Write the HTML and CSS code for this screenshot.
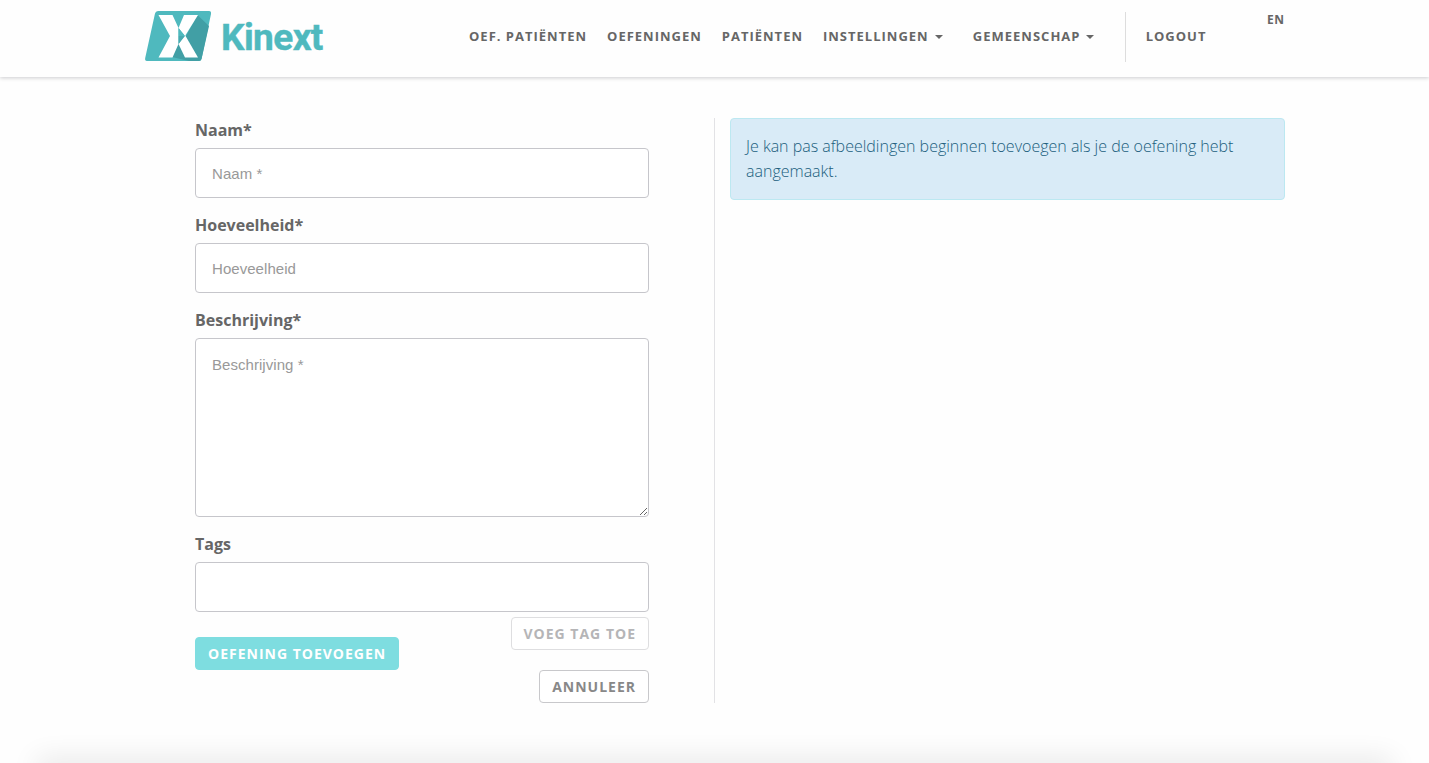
FILE: index.html
```html
<!DOCTYPE html>
<html lang="nl">
<head>
<meta charset="utf-8">
<title>Kinext</title>
<link rel="stylesheet" href="styles.css">
</head>
<body>
<header class="header">
  <a class="brand">
    <svg class="logo" viewBox="0 0 68 52" width="68" height="52" aria-hidden="true">
      <path d="M14 1H65Q67.500 1 67 4L57.500 49Q57 51 55 51H3Q.6 51 1.200 48L11 3.500Q11.500 1 14 1Z" fill="#4fb9be"/>
      <path d="M53.500 5L65 16L57.500 49Q57 51 55 51H45L28 47L34 34L42 26Z" fill="#419fa5"/>
      <path d="M14.500 5H28.500L34.500 18V34L28.500 47.500H14.500L26 26Z" fill="#fff"/>
      <path d="M40 5H54L41 26L34.500 18Z" fill="#fff"/>
      <path d="M41 25L54 47.500H41L34.500 34Z" fill="#fff"/>
      <path d="M34.500 18V26H41Z" fill="#4fb9be"/>
      <path d="M34.500 34V26H41Z" fill="#46aab0"/>
    </svg>
    <span class="brand-name">Kinext</span>
  </a>
  <nav class="nav">
    <a class="nav-link">OEF. PATIËNTEN</a>
    <a class="nav-link">OEFENINGEN</a>
    <a class="nav-link">PATIËNTEN</a>
    <a class="nav-link dropdown">INSTELLINGEN<i class="caret"></i></a>
    <a class="nav-link dropdown">GEMEENSCHAP<i class="caret"></i></a>
    <a class="nav-link logout">LOGOUT</a>
  </nav>
  <a class="language">EN</a>
</header>
<main class="content">
  <form class="exercise-form">
    <label class="label" for="name">Naam*</label>
    <input class="field" id="name" placeholder="Naam *">
    <label class="label" for="amount">Hoeveelheid*</label>
    <input class="field" id="amount" placeholder="Hoeveelheid">
    <label class="label" for="description">Beschrijving*</label>
    <textarea class="field description" id="description" placeholder="Beschrijving *"></textarea>
    <label class="label" for="tags">Tags</label>
    <input class="field" id="tags">
    <div class="actions">
      <button class="button primary" type="button">OEFENING TOEVOEGEN</button>
      <div class="secondary-actions">
        <button class="button muted" type="button" disabled>VOEG TAG TOE</button>
        <button class="button" type="button">ANNULEER</button>
      </div>
    </div>
  </form>
  <section class="images">
    <p class="notice">Je kan pas afbeeldingen beginnen toevoegen als je de oefening hebt aangemaakt.</p>
  </section>
</main>
<div class="bottom-shadow"></div>
</body>
</html>
```
FILE: styles.css
```css
* { box-sizing: border-box; }
body {
  margin: 0;
  height: 763px;
  overflow: hidden;
  background: #fefefe;
  color: #666;
  font-family: "Open Sans", sans-serif;
  font-size: 16px;
}
.header {
  display: flex;
  align-items: flex-start;
  height: 77px;
  padding-left: 144px;
  box-shadow: 0 1px 4px rgba(0, 0, 20, .2);
}
.brand { display: flex; width: 325px; padding-top: 10px; }
.logo { flex: none; }
.brand-name {
  margin: 4px 0 0 9px;
  color: #4fb9be;
  font: bold 37px/47px Roboto, sans-serif;
  letter-spacing: -.6px;
  -webkit-text-stroke: .4px #4fb9be;
}
.nav { display: flex; width: 798px; padding-top: 12px; }
.nav-link {
  height: 50px;
  margin-right: 20px;
  font-size: 13px;
  font-weight: 700;
  line-height: 49px;
  letter-spacing: 1px;
  white-space: nowrap;
}
.dropdown { margin-right: 30.2px; }
.caret {
  display: inline-block;
  margin-left: 6px;
  border: 4px solid transparent;
  border-top-color: currentColor;
  border-bottom: 0;
  vertical-align: 2px;
}
.logout { padding-left: 20px; border-left: 1px solid #ddd; }
.language { padding-top: 11px; font-size: 12px; font-weight: 700; line-height: 17px; letter-spacing: .5px; }
.content { display: flex; padding: 41px 0 0 195px; }
.exercise-form { width: 454px; }
.label { display: block; height: 30px; font-weight: 700; line-height: 24px; }
.field {
  display: block;
  width: 100%;
  height: 50px;
  margin-bottom: 15px;
  padding: 0 16px;
  border: 1px solid #c6c6cb;
  border-radius: 4px;
  background: #fff;
  font: 15px/22px "Liberation Sans", Arial, sans-serif;
  letter-spacing: .05px;
}
.field::placeholder { color: #999; opacity: 1; }
.description { height: 179px; padding-top: 15px; resize: vertical; }
.actions { display: flex; justify-content: space-between; align-items: flex-start; margin-top: -10px; }
.button {
  height: 33px;
  padding: 0 12px;
  border: 1px solid #c8c8cb;
  border-radius: 4px;
  background: #fff;
  color: #888;
  font: 700 14px/31px "Open Sans", sans-serif;
  letter-spacing: 1px;
  white-space: nowrap;
}
.primary { margin-top: 20px; border-color: #7edde0; background: #7edde0; color: #fff; }
.secondary-actions { display: flex; flex-direction: column; align-items: flex-end; gap: 20px; }
.muted { border-color: #dedee0; color: #b5b5b7; }
.images { width: 571px; height: 585px; margin-left: 65px; padding-left: 15px; border-left: 1px solid #e2e2e5; }
.notice {
  height: 82px;
  margin: 0;
  padding: 15px;
  border: 1px solid #bce8f1;
  border-radius: 4px;
  background: #d9ebf7;
  color: #205e7d;
  font-weight: 300;
  line-height: 25px;
}
.bottom-shadow {
  position: absolute;
  right: 40px;
  bottom: -10px;
  left: 40px;
  height: 10px;
  box-shadow: 0 0 28px 3px rgba(0, 0, 0, .12);
}
```
